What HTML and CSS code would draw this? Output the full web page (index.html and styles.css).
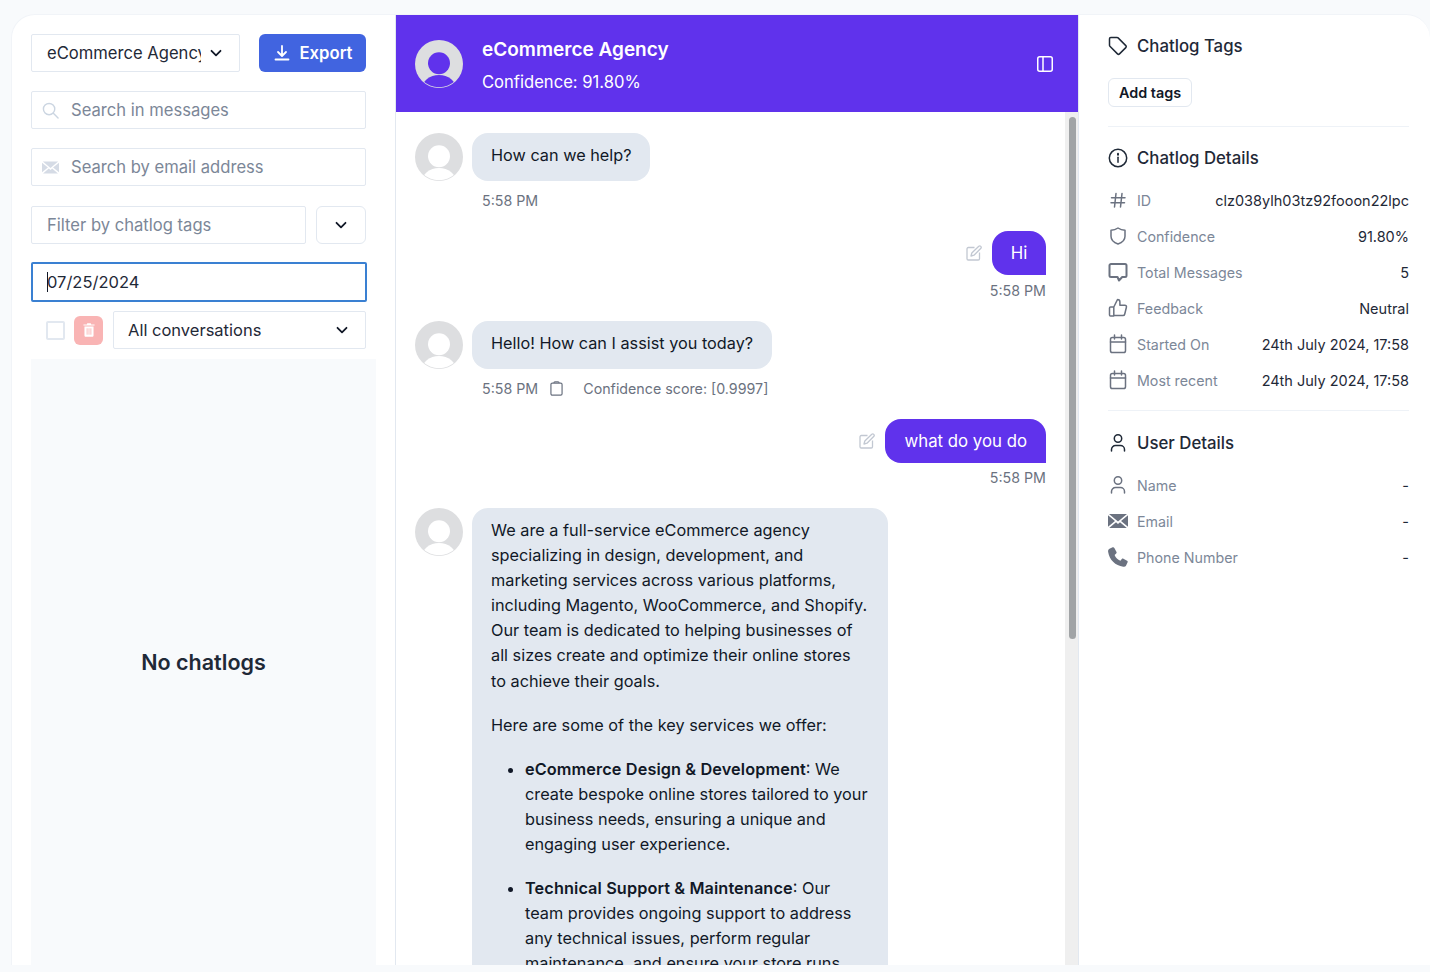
FILE: index.html
```html
<!DOCTYPE html>
<html lang="en">
<head>
    <meta charset="UTF-8">
    <meta name="viewport" content="width=device-width, initial-scale=1.0">
    <title>Chatlogs</title>
    <link rel="stylesheet" href="styles.css">
</head>
<body>
<div class="card">

    <aside class="sidebar">
        <div class="row top-row">
            <div class="box agent-select">
                <span class="agent-name">eCommerce Agency</span>
                <svg class="chev" viewBox="0 0 14 14"><path d="M2.5 4.8 7 9.3l4.5-4.5"/></svg>
            </div>
            <button class="export-btn">
                <svg class="export-icon" viewBox="0 0 18 18"><path d="M9 2v9.5M5 8l4 4 4-4M2.5 15.5h13"/></svg>
                Export
            </button>
        </div>
        <div class="box search-box">
            <svg class="field-icon" viewBox="0 0 18 18"><circle cx="7.5" cy="7.5" r="6"/><path d="m12 12 5 5"/></svg>
            <span class="placeholder">Search in messages</span>
        </div>
        <div class="box search-box">
            <svg class="field-icon mail-fill" viewBox="0 0 20 14"><path d="M0 1.3 7 7 0 12.7zM20 1.3 13 7l7 5.7zM1 0h18l-9 7.5zM1.2 14 8 8.3l2 1.6 2-1.6 6.8 5.7z"/></svg>
            <span class="placeholder">Search by email address</span>
        </div>
        <div class="row tag-row">
            <div class="box tag-filter"><span class="placeholder">Filter by chatlog tags</span></div>
            <button class="tag-toggle"><svg class="chev" viewBox="0 0 14 14"><path d="M2.5 4.8 7 9.3l4.5-4.5"/></svg></button>
        </div>
        <div class="date-box"><span class="caret"></span>07/25/2024</div>
        <div class="row filter-row">
            <span class="checkbox"></span>
            <button class="trash-btn">
                <svg viewBox="0 0 14 16" width="12" height="14"><path fill="#fff" d="M5 0h4l.6 1.5h3.9v1.3H.5V1.5h3.9zM1.7 4h10.6v10.5c0 .8-.7 1.5-1.5 1.5H3.2c-.8 0-1.5-.7-1.500-1.500z"/><path stroke="#f9b4b4" d="M4.8 6v7.5M7 6v7.5M9.2 6v7.5"/></svg>
            </button>
            <div class="box convo-select">
                All conversations
                <svg class="chev" viewBox="0 0 14 14"><path d="M2.5 4.8 7 9.3l4.5-4.5"/></svg>
            </div>
        </div>
        <div class="chatlog-list"><span>No chatlogs</span></div>
    </aside>

    <main class="chat">
        <header class="chat-header">
            <svg class="avatar" viewBox="0 0 48 48">
                <defs><clipPath id="avatar-clip"><circle cx="24" cy="24" r="23.3"/></clipPath></defs>
                <circle cx="24" cy="24" r="24" fill="#dddee0"/>
                <circle cx="24" cy="23.3" r="11" fill="#6032ec"/>
                <ellipse cx="24" cy="49" rx="17" ry="14" fill="#6032ec" clip-path="url(#avatar-clip)"/>
            </svg>
            <div class="header-text">
                <h1>eCommerce Agency</h1>
                <p>Confidence: 91.80%</p>
            </div>
            <svg class="panel-icon" viewBox="0 0 16 16"><rect x=".75" y=".75" width="14.5" height="14.5" rx="2"/><path d="M6 .75v14.5"/></svg>
        </header>

        <div class="messages">
            <div class="scrollbar"><div class="scroll-thumb"></div></div>

            <div class="msg-in">
                <svg class="avatar" viewBox="0 0 48 48"><circle cx="24" cy="24" r="24" fill="#dddee0"/><circle cx="24" cy="23.3" r="11" fill="#fff"/><ellipse cx="24" cy="49" rx="17" ry="14" fill="#fff" clip-path="url(#avatar-clip)"/></svg>
                <div class="msg-body">
                    <div class="bubble-in">How can we help?</div>
                    <div class="meta"><span>5:58 PM</span></div>
                </div>
            </div>

            <div class="msg-out">
                <div class="out-line">
                    <svg class="edit-icon" viewBox="0 0 16 16"><path d="M8.5 2.5H2.3c-.7 0-1.3.6-1.3 1.3v9.900c0 .7.6 1.3 1.3 1.3h9.900c.7 0 1.3-.6 1.3-1.3V7.5"/><path d="M12.8 1.2a1.5 1.5 0 0 1 2.1 2.1L8 10.200l-3 .8.8-3z"/></svg>
                    <div class="bubble-out hi">Hi</div>
                </div>
                <div class="meta">5:58 PM</div>
            </div>

            <div class="msg-in">
                <svg class="avatar" viewBox="0 0 48 48"><circle cx="24" cy="24" r="24" fill="#dddee0"/><circle cx="24" cy="23.3" r="11" fill="#fff"/><ellipse cx="24" cy="49" rx="17" ry="14" fill="#fff" clip-path="url(#avatar-clip)"/></svg>
                <div class="msg-body">
                    <div class="bubble-in">Hello! How can I assist you today?</div>
                    <div class="meta">
                        <span>5:58 PM</span>
                        <svg class="clip-icon" viewBox="0 0 14 16"><rect x="1" y="2.2" width="12" height="13" rx="1.5"/><path d="M4.3 2.2V1.8c0-.5.4-1 1-1h3.4c.6 0 1 .5 1 1v.4"/></svg>
                        <span>Confidence score: [0.9997]</span>
                    </div>
                </div>
            </div>

            <div class="msg-out">
                <div class="out-line">
                    <svg class="edit-icon" viewBox="0 0 16 16"><path d="M8.5 2.5H2.3c-.7 0-1.3.6-1.3 1.3v9.900c0 .7.6 1.3 1.3 1.3h9.900c.7 0 1.3-.6 1.3-1.3V7.5"/><path d="M12.8 1.2a1.5 1.5 0 0 1 2.1 2.1L8 10.200l-3 .8.8-3z"/></svg>
                    <div class="bubble-out wide">what do you do</div>
                </div>
                <div class="meta">5:58 PM</div>
            </div>

            <div class="msg-in long">
                <svg class="avatar" viewBox="0 0 48 48"><circle cx="24" cy="24" r="24" fill="#dddee0"/><circle cx="24" cy="23.3" r="11" fill="#fff"/><ellipse cx="24" cy="49" rx="17" ry="14" fill="#fff" clip-path="url(#avatar-clip)"/></svg>
                <div class="msg-body">
                    <div class="bubble-in answer">
                        <p>We are a full-service eCommerce agency specializing in design, development, and marketing services across various platforms, including Magento, WooCommerce, and Shopify. Our team is dedicated to helping businesses of all sizes create and optimize their online stores to achieve their goals.</p>
                        <p>Here are some of the key services we offer:</p>
                        <ul>
                            <li><b>eCommerce Design &amp; Development</b>: We create bespoke online stores tailored to your business needs, ensuring a unique and engaging user experience.</li>
                            <li><b>Technical Support &amp; Maintenance</b>: Our team provides ongoing support to address any technical issues, perform regular maintenance, and ensure your store runs smoothly.</li>
                        </ul>
                    </div>
                </div>
            </div>
        </div>
    </main>

    <aside class="details">
        <div class="section-title">
            <svg class="title-icon" viewBox="0 0 20 20"><path d="M1.5 2.8c0-.7.6-1.3 1.3-1.3h6.3c.4 0 .8.2 1 .4l7.700 7.700c.6.6.6 1.4 0 2l-6.300 6.300c-.6.6-1.400.6-2 0L1.900 10.200c-.3-.3-.4-.6-.4-1z"/></svg>
            Chatlog Tags
        </div>
        <button class="add-tags">Add tags</button>
        <hr class="divider first-divider">

        <div class="section-title">
            <svg class="title-icon" viewBox="0 0 20 20"><circle cx="10" cy="10" r="8.7"/><path d="M10 9.3v5"/><path d="M10 5.8v.9" stroke-width="2"/></svg>
            Chatlog Details
        </div>
        <div class="detail-list">
            <div class="detail-row">
                <svg class="row-icon" viewBox="0 0 20 20"><path d="M8 3.5 6.5 17M14 3.5 12.5 17M3.500 7.800H17M3 12.800h13.500"/></svg>
                <span class="label">ID</span><span class="value">clz038ylh03tz92fooon22lpc</span>
            </div>
            <div class="detail-row">
                <svg class="row-icon" viewBox="0 0 20 20"><path d="M10 2c2 1.4 4.3 2.2 7 2.3v6c0 3.600-2.800 6.300-7 7.700-4.200-1.400-7-4.100-7-7.700v-6C5.700 4.200 8 3.400 10 2z"/></svg>
                <span class="label">Confidence</span><span class="value">91.80%</span>
            </div>
            <div class="detail-row">
                <svg class="row-icon thick" viewBox="0 0 20 20"><path d="M3 2h14c.8 0 1.500.7 1.500 1.500v10c0 .8-.7 1.500-1.500 1.500h-2.800L11 18.500 9.500 15H3c-.8 0-1.500-.7-1.500-1.500v-10C1.500 2.700 2.200 2 3 2z"/></svg>
                <span class="label">Total Messages</span><span class="value">5</span>
            </div>
            <div class="detail-row">
                <svg class="row-icon" viewBox="0 0 20 20"><path d="M5.800 9 9.500 1.500c1.500 0 2.400 1.100 2.400 2.500v3.200h5c1 0 1.800 1 1.500 2l-1.700 7c-.2.800-.9 1.300-1.700 1.300H5.800zM5.800 9H2.500c-.6 0-1 .4-1 1v7c0 .6.400 1 1 1h3.300"/></svg>
                <span class="label">Feedback</span><span class="value">Neutral</span>
            </div>
            <div class="detail-row">
                <svg class="row-icon" viewBox="0 0 20 20"><rect x="2.500" y="3.500" width="15" height="15" rx="1.800"/><path d="M2.500 8h15M6.500 1v4M13.500 1v4"/></svg>
                <span class="label">Started On</span><span class="value">24th July 2024, 17:58</span>
            </div>
            <div class="detail-row">
                <svg class="row-icon" viewBox="0 0 20 20"><rect x="2.500" y="3.500" width="15" height="15" rx="1.800"/><path d="M2.500 8h15M6.500 1v4M13.500 1v4"/></svg>
                <span class="label">Most recent</span><span class="value">24th July 2024, 17:58</span>
            </div>
        </div>
        <hr class="divider second-divider">

        <div class="section-title">
            <svg class="title-icon" viewBox="0 0 20 20"><circle cx="10" cy="5.500" r="3.700"/><path d="M3.500 18v-1.500c0-2.200 1.800-4 4-4h5c2.200 0 4 1.800 4 4V18"/></svg>
            User Details
        </div>
        <div class="detail-list">
            <div class="detail-row">
                <svg class="row-icon" viewBox="0 0 20 20"><circle cx="10" cy="5.500" r="3.700"/><path d="M3.500 18v-1.500c0-2.200 1.800-4 4-4h5c2.200 0 4 1.800 4 4V18"/></svg>
                <span class="label">Name</span><span class="value">-</span>
            </div>
            <div class="detail-row">
                <svg class="row-icon solid" viewBox="0 0 20 14"><path d="M0 1.300 7 7 0 12.700zM20 1.300 13 7l7 5.700zM1 0h18l-9 7.500zM1.200 14 8 8.300l2 1.600 2-1.600 6.800 5.700z"/></svg>
                <span class="label">Email</span><span class="value">-</span>
            </div>
            <div class="detail-row">
                <svg class="row-icon solid" viewBox="0 0 20 20"><path d="M4.600.3 1.500 1.800C.4 2.400 0 3.600.1 4.700c.6 3.900 2.300 7.300 5 10.100 2.800 2.800 6.100 4.400 10.100 5 1.100.1 2.300-.3 2.900-1.400l1.500-3.100c.3-.6.1-1.300-.5-1.600l-3.700-2c-.5-.3-1.200-.2-1.600.3l-1.400 1.700c-2.700-1.100-4.700-3.100-5.800-5.800L8.200 6.500c.5-.4.6-1.100.3-1.600l-2-3.700C6.100.3 5.300 0 4.600.3z"/></svg>
                <span class="label">Phone Number</span><span class="value">-</span>
            </div>
        </div>
    </aside>
</div>
<div class="bottom-fade"></div>
</body>
</html>
```

FILE: styles.css
```css
* {
    box-sizing: border-box;
}

html, body {
    margin: 0;
    height: 100%;
    overflow: hidden;
}

body {
    background-color: #f8fafc;
    font-family: Inter, "Liberation Sans", sans-serif;
    color: #111827;
    padding: 14px 0 0 11px;
}

svg {
    display: block;
    flex: none;
}

button {
    font-family: inherit;
    cursor: pointer;
}

.card {
    display: grid;
    grid-template-columns: 384px 683px 1fr;
    height: 951px;
    background-color: white;
    border: 1px solid #f1f4f8;
    border-right: none;
    border-bottom: none;
    border-radius: 24px 24px 0 0;
}

.bottom-fade {
    height: 7px;
    background-color: #f8fafc;
}

/* left column */
.sidebar {
    padding: 19px 0 0 19px;
    border-right: 1px solid #e2e8f0;
    display: flex;
    flex-direction: column;
    min-height: 0;
}

.row {
    display: flex;
    align-items: center;
}

.box {
    display: flex;
    align-items: center;
    height: 38px;
    border: 1px solid #e2e8f0;
    border-radius: 2px;
    background-color: white;
    font-size: 16.6px;
}

.top-row {
    width: 335px;
    justify-content: space-between;
    margin-bottom: 19px;
}

.agent-select {
    width: 209px;
    padding-left: 15px;
    color: #1f2937;
}

.agent-name {
    width: 154px;
    overflow: hidden;
    white-space: nowrap;
}

.chev {
    width: 14px;
    height: 14px;
    fill: none;
    stroke: #111827;
    stroke-width: 1.8;
    stroke-linecap: round;
    stroke-linejoin: round;
}

.agent-select .chev {
    margin-left: 8px;
}

.export-btn {
    display: flex;
    align-items: center;
    justify-content: center;
    gap: 9px;
    width: 107px;
    height: 38px;
    border: none;
    border-radius: 6px;
    background-color: #4164e0;
    color: white;
    font-size: 16.7px;
    font-weight: 600;
}

.export-icon {
    width: 18px;
    height: 18px;
    fill: none;
    stroke: white;
    stroke-width: 1.8;
    stroke-linecap: round;
    stroke-linejoin: round;
}

.search-box {
    width: 335px;
    padding-left: 10px;
    margin-bottom: 19.4px;
    gap: 12px;
}

.field-icon {
    width: 17px;
    height: 17px;
    fill: none;
    stroke: #cbd5e1;
    stroke-width: 1.5;
    stroke-linecap: round;
}

.mail-fill {
    fill: #d5dbe5;
    stroke: none;
}

.placeholder {
    color: #7c8798;
    white-space: nowrap;
}

.tag-row {
    width: 335px;
    justify-content: space-between;
    margin-bottom: 19.4px;
}

.tag-filter {
    width: 275px;
    padding-left: 15px;
}

.tag-toggle {
    display: flex;
    align-items: center;
    justify-content: center;
    width: 50px;
    height: 38px;
    padding: 0;
    border: 1px solid #e2e8f0;
    border-radius: 6px;
    background-color: white;
}

.date-box {
    display: flex;
    align-items: center;
    width: 336px;
    height: 40px;
    margin: -1px 0 9px;
    padding-left: 14px;
    border: 2px solid #3a80d2;
    border-radius: 2px;
    font-size: 16.5px;
    color: #1f2937;
}

.caret {
    width: 1px;
    height: 20px;
    margin-right: -1px;
    background-color: #111827;
}

.filter-row {
    width: 335px;
    padding-left: 15px;
    margin-bottom: 10px;
}

.checkbox {
    width: 19px;
    height: 19px;
    margin-right: 9px;
    border: 2px solid #e2e8f0;
    border-radius: 2px;
}

.trash-btn {
    display: flex;
    align-items: center;
    justify-content: center;
    width: 29px;
    height: 29px;
    padding: 0;
    margin-right: 10px;
    border: none;
    border-radius: 6px;
    background-color: #f9b4b4;
}

.convo-select {
    flex: 1;
    padding: 0 16px 0 14px;
    justify-content: space-between;
    font-size: 16.5px;
    color: #1f2937;
}

.chatlog-list {
    flex: 1;
    width: 345px;
    display: flex;
    align-items: center;
    justify-content: center;
    background-color: #f8fafc;
    font-size: 21.5px;
    font-weight: 600;
    color: #1f2937;
}

/* middle column */
.chat {
    display: flex;
    flex-direction: column;
    min-height: 0;
    overflow: hidden;
    border-right: 1px solid #e2e8f0;
}

.chat-header {
    display: flex;
    align-items: center;
    height: 97px;
    flex: none;
    padding: 0 25px 0 19px;
    background-color: #6032ec;
    color: white;
}

.avatar {
    width: 48px;
    height: 48px;
}

.header-text {
    flex: 1;
    margin-left: 19px;
    padding-top: 3px;
}

.header-text h1 {
    margin: 0 0 6px;
    font-size: 19px;
    line-height: 28px;
    font-weight: 600;
}

.header-text p {
    margin: 0;
    font-size: 16.6px;
    line-height: 24px;
}

.panel-icon {
    width: 16px;
    height: 16px;
    fill: none;
    stroke: white;
    stroke-width: 1.5;
}

.messages {
    position: relative;
    flex: 1;
    min-height: 0;
    overflow: hidden;
    padding: 21px 32px 0 19px;
}

.scrollbar {
    position: absolute;
    top: 0;
    right: 0;
    bottom: 0;
    width: 13px;
    background-color: #efefef;
}

.scroll-thumb {
    width: 7px;
    height: 522px;
    margin: 5px 0 0 4px;
    border-radius: 4px;
    background-color: #a1a4a6;
}

.msg-in {
    display: flex;
    gap: 9px;
}

.msg-body {
    display: flex;
    flex-direction: column;
}

.bubble-in {
    align-self: flex-start;
    padding: 10px 19px 13px;
    border-radius: 16px;
    background-color: #e2e8f0;
    font-size: 16.25px;
    line-height: 25px;
    color: #111827;
}

.meta {
    display: flex;
    align-items: center;
    height: 20px;
    margin-top: 9.5px;
    padding-left: 10px;
    font-size: 14.25px;
    color: #6b7280;
}

.clip-icon {
    width: 13px;
    height: 15px;
    margin: 0 20px 0 12px;
    fill: none;
    stroke: #6b7280;
    stroke-width: 1.3;
}

.msg-out {
    display: flex;
    flex-direction: column;
    align-items: flex-end;
    margin: 20.5px 0;
}

.msg-out .meta {
    padding-left: 0;
    margin-top: 5px;
}

.out-line {
    display: flex;
    align-items: center;
    gap: 10px;
}

.edit-icon {
    width: 16px;
    height: 16px;
    fill: none;
    stroke: #c2c8d2;
    stroke-width: 1.3;
    stroke-linejoin: round;
}

.bubble-out {
    height: 44px;
    display: flex;
    align-items: center;
    border-radius: 16px 16px 0 16px;
    background-color: #6032ec;
    color: white;
    font-size: 16.8px;
}

.wide {
    padding: 0 19px 0 20px;
}

.hi {
    width: 54px;
    justify-content: center;
}

.answer {
    width: 416px;
    padding: 10px 19px 0;
    font-size: 16.3px;
    line-height: 25.1px;
    border-radius: 16px 16px 0 0;
}

.answer p {
    margin: 0 0 19px;
}

.answer ul {
    margin: 0;
    padding-left: 34px;
}

.answer li {
    margin-bottom: 19px;
}

.answer b {
    font-weight: 600;
    letter-spacing: 0.1px;
}

/* right column */
.details {
    padding: 19px 21px 0 29px;
}

.section-title {
    display: flex;
    align-items: center;
    gap: 9px;
    height: 24px;
    font-size: 16.8px;
    font-weight: 500;
    color: #1f2937;
}

.title-icon {
    width: 20px;
    height: 20px;
    fill: none;
    stroke: #1f2937;
    stroke-width: 1.5;
    stroke-linecap: round;
    stroke-linejoin: round;
}

.add-tags {
    display: block;
    width: 84px;
    height: 29px;
    margin-top: 20px;
    padding: 0;
    border: 1px solid #e2e8f0;
    border-radius: 6px;
    background-color: white;
    font-size: 14.4px;
    font-weight: 600;
    color: #111827;
}

.divider {
    margin: 0;
    border: none;
    border-top: 1px solid #eef2f7;
}

.first-divider {
    margin: 19px 0;
}

.second-divider {
    margin: 12px 0 20px;
}

.detail-list {
    margin-top: 12px;
}

.detail-row {
    display: flex;
    align-items: center;
    height: 36px;
    font-size: 14.5px;
}

.row-icon {
    width: 20px;
    height: 20px;
    margin-right: 9px;
    fill: none;
    stroke: #6b7280;
    stroke-width: 1.5;
    stroke-linecap: round;
    stroke-linejoin: round;
}

.row-icon.thick {
    stroke-width: 2;
}

.row-icon.solid {
    fill: #6b7280;
    stroke: none;
}

.label {
    flex: 1;
    font-size: 14.25px;
    color: #7c8798;
}

.value {
    color: #1f2937;
    white-space: nowrap;
}
```
